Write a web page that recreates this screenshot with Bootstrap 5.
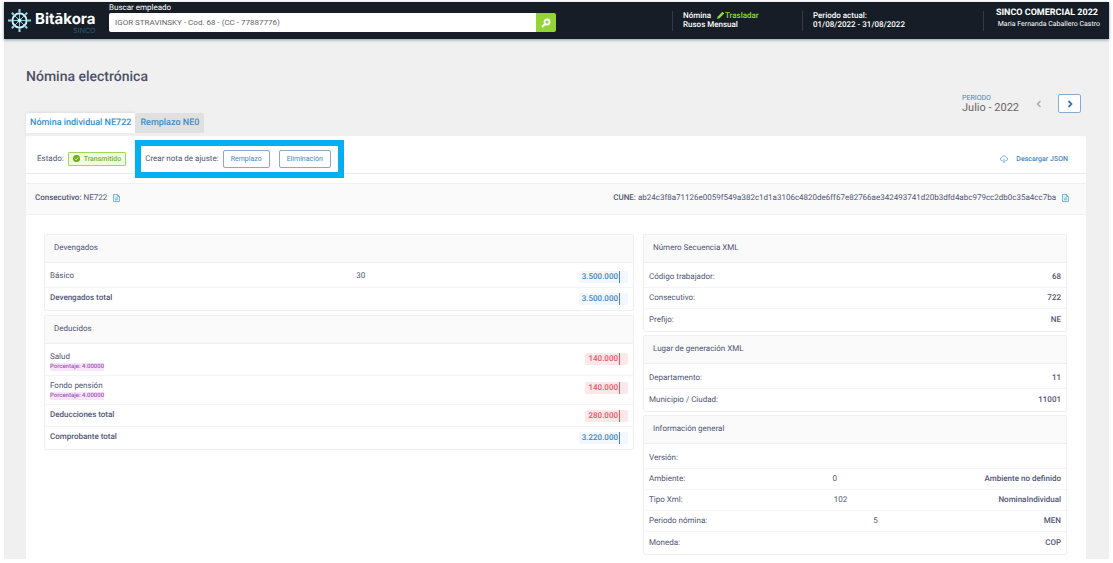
<!DOCTYPE html>
<html lang="es">
<head>
<meta charset="utf-8">
<meta name="viewport" content="width=device-width, initial-scale=1">
<title>Bitákora - Nómina electrónica</title>
<link href="https://cdn.jsdelivr.net/npm/bootstrap@5.3.0/dist/css/bootstrap.min.css" rel="stylesheet">
<style>
  body { font-family: Roboto, "Liberation Sans", sans-serif; font-size: 8px; line-height: 12px; color: #4f5673; background: #fff; padding: 2px 4px 4px; text-rendering: geometricPrecision; }
  a { text-decoration: none; color: #4a86b8; }
  .top-bar { background: #161d27; color: #fff; height: 37px; box-shadow: 0 1px 3px #8d9cb4; position: relative; line-height: 10px; }
  .brand { width: 105px; padding-left: 4px; color: #fff; }
  .brand-name { font: 700 15px/16px Inter, "DejaVu Sans", sans-serif; }
  .brand-sub { font: 400 7px/8px Inter, sans-serif; color: #2b5c72; }
  .search-zone { margin-right: 116px; padding-bottom: 6px; }
  .search-zone label { font-size: 8px; display: block; }
  .search-zone .form-control { height: 19px; min-height: 0; padding: 0 6px; font-size: 8px; color: #666; border: 0; border-radius: 2px 0 0 2px; }
  .search-zone .btn { width: 21px; height: 19px; padding: 0; background: #93d535; border: 0; border-radius: 0 2px 2px 0; }
  .info { border-left: 1px solid #333a44; height: 20px; padding-left: 10px; font-weight: 500; white-space: nowrap; line-height: 9px; }
  .info-payroll { width: 130px; }
  .info-period { width: 181px; }
  .info-user { width: 126px; padding: 0 9px 2px 0; }
  .company { font-size: 9px; line-height: 10px; margin-top: -3px; padding-right: 2px; font-weight: 700; }
  .user-name { font-size: 7px; font-weight: 400; }
  .green { color: #8fdc3c; }
  .page { background: #f0f0f0; padding: 28px 23px 0 22px; }
  h1 { font-size: 14px; line-height: 20px; font-weight: 500; color: #4d5069; margin: 0; }
  .period-label { font-size: 7px; line-height: 8px; color: #4a86b8; }
  .period-value { font-size: 11px; line-height: 12px; color: #666; }
  .period-bar { height: 26px; padding: 7px 5px 0 0; }
  .period-bar .btn { width: 23px; height: 19px; padding: 0; border-radius: 2px; display: flex; align-items: center; justify-content: center; }
  .btn-prev { background: #ededed; border: 0; opacity: 1; }
  .btn-next { background: #fff; border: 1px solid #86add0; }
  .nav-tabs { border: 0; padding-bottom: 3px; }
  .nav-tabs .nav-link { border: 0; padding: 1px 5px 0; line-height: 19px; font-size: 9px; font-weight: 500; color: #3c8dc5; background: #e0e0e0; border-radius: 2px 2px 0 0; margin: 0; }
  .nav-tabs .nav-link.active { background: #fff; color: #3c8dc5; box-shadow: 0 -1px 3px #ddd; padding: 1px 4px 0; }
  .sheet { background: #fff; border-radius: 2px 2px 0 0; }
  .tool-row { height: 38px; padding: 8px 18px 0 11px; border-bottom: 1px solid #e9ebf3; }
  .status { border: 1px solid #9bd85c; background: #f0fde0; color: #72b81e; height: 14px; padding: 0 4px; border-radius: 1px; font-size: 7px; font-weight: 500; }
  .download { font-size: 7px; font-weight: 500; }
  .adjust { margin-left: 19px; height: 18px; position: relative; }
  .adjust::after { content: ""; position: absolute; inset: -10px -13px -10px -10px; border: 6px solid #00b0f0; pointer-events: none; }
  .adjust .btn { height: 18px; padding: 0 7px; font-size: 7px; line-height: 16px; color: #4a86b8; border: 1px solid #86a9cc; border-radius: 2px; background: #fff; }
  .adjust .btn + .btn { margin-left: 9px; }
  .id-row { margin-top: 9px; height: 32px; padding: 0 17px 2px 9px; background: #fafafa; border: solid #f0f0f0; border-width: 1px 0; }
  .sheet-body { display: grid; grid-template-columns: 590fr 424fr; column-gap: 9px; padding: 19px 19px 4px 18px; align-items: start; }
  .stack { display: grid; row-gap: 4px; }
  .panel { border: 1px solid #efefef; border-radius: 2px; }
  .panel h2 { margin: 0; height: 28px; line-height: 25px; padding-left: 9px; font-size: 8px; font-weight: 400; background: #fafafa; border-bottom: 1px solid #efefef; }
  .panel ul { padding: 4px 0 0; margin: 0; list-style: none; }
  .panel li { display: flex; justify-content: space-between; align-items: center; height: 21px; padding: 0 5px; border-bottom: 1px solid #f4f4f4; }
  .panel li:last-child { border-bottom: 0; height: 22px; }
  .stack > .panel:not(.amounts):not(:last-child) { margin-bottom: -1px; }
  .amounts ul { padding-top: 3px; }
  .amounts li { height: 22px; padding-bottom: 2px; }
  .amounts li.tall { height: 29px; align-items: flex-start; padding-top: 4px; }
  .qty { flex: 0 0 47%; display: flex; justify-content: space-between; align-items: center; }
  b { font-weight: 500; }
  .amt { font-weight: 500; line-height: 12px; padding: 0 8px 0 3px; border-radius: 2px; color: #4a86b8; background: #f1f7fd; margin-top: 2px; }
  .amt.neg { color: #ee5568; background: #fde8e9; }
  .amt span { border-right: 1px solid; padding-right: 1px; display: block; }
  .pct { font-size: 6px; line-height: 8px; font-weight: 500; color: #a05bb0; background: #f8e4fb; display: table; }
</style>
</head>
<body>
<header class="top-bar d-flex align-items-center">
  <a href="#" class="brand d-flex align-items-center gap-1 flex-shrink-0">
    <svg width="23" height="23" viewBox="0 0 24 24" fill="none" stroke="#8ed2ea" stroke-width="1.4">
      <circle cx="12" cy="12" r="7.4" stroke="#d8f1f8" stroke-width="2"/>
      <path d="M12 5v14M5 12h14M7 7l10 10M17 7 7 17" stroke-width="1"/>
      <path d="M12 0v4M12 20v4M0 12h4M20 12h4M4 4l2 2M18 18l2 2M20 4l-2 2M6 18l-2 2" stroke-width="2.200"/>
      <circle cx="12" cy="12" r="2.200" fill="#d8f1f8" stroke="none"/>
    </svg>
    <span class="text-end pt-1"><span class="brand-name d-block">Bitākora</span><span class="brand-sub d-block">SINCO</span></span>
  </a>
  <form class="search-zone flex-grow-1">
    <label for="emp">Buscar empleado</label>
    <div class="d-flex">
      <input id="emp" class="form-control" type="text" value="IGOR STRAVINSKY - Cod. 68 - (CC - 77887776)">
      <button type="button" class="btn d-flex align-items-center justify-content-center" aria-label="Buscar">
        <svg width="10" height="10" viewBox="0 0 10 10" fill="none" stroke="#fff"><circle cx="6" cy="4" r="2.500" stroke-width="1.800"/><path d="M4 6 1 9" stroke-width="2.200"/></svg>
      </button>
    </div>
  </form>
  <div class="info info-payroll flex-shrink-0">
    <div>Nómina <a href="#" class="green ms-1"><svg width="8" height="8" viewBox="0 0 8 8" fill="#8fdc3c"><path d="M0 8 .8 5.500 5.500.8 7.200 2.500 2.500 7.200z"/></svg>Trasladar</a></div>
    <div>Rusos Mensual</div>
  </div>
  <div class="info info-period flex-shrink-0"><div>Periodo actual:</div><div>01/08/2022 - 31/08/2022</div></div>
  <div class="info info-user flex-shrink-0 text-end d-flex flex-column justify-content-between"><div class="company">SINCO COMERCIAL 2022</div><div class="user-name">Maria Fernanda Caballero Castro</div></div>
</header>
<main class="page">
  <h1>Nómina electrónica</h1>
  <div class="period-bar d-flex justify-content-end align-items-center">
    <div class="me-2"><div class="period-label">PERIODO</div><div class="period-value">Julio - 2022</div></div>
    <button class="btn btn-prev me-2" disabled aria-label="Anterior"><svg width="6" height="8" viewBox="0 0 6 8" fill="none" stroke="#888" stroke-width="1.500"><path d="M4.500 1 1.500 4l3 3"/></svg></button>
    <button class="btn btn-next" aria-label="Siguiente"><svg width="6" height="8" viewBox="0 0 6 8" fill="none" stroke="#3b78b5" stroke-width="1.800"><path d="m1.500 1 3 3-3 3"/></svg></button>
  </div>
  <nav class="nav nav-tabs">
    <a class="nav-link active" href="#">Nómina individual NE722</a>
    <a class="nav-link" href="#">Remplazo NE0</a>
  </nav>
  <section class="sheet">
    <div class="tool-row d-flex align-items-center">
      <span class="me-1">Estado:</span>
      <span class="status d-flex align-items-center gap-1"><svg width="7" height="7" viewBox="0 0 8 8"><circle cx="4" cy="4" r="4" fill="#6aaf16"/><path d="m2 4 1.500 1.500L6 2.800" fill="none" stroke="#f0fde0"/></svg>Transmitido</span>
      <div class="adjust d-flex align-items-center">
        <span class="me-1">Crear nota de ajuste:</span>
        <button class="btn">Remplazo</button>
        <button class="btn">Eliminación</button>
      </div>
      <a href="#" class="download ms-auto d-flex align-items-center gap-1"><svg class="me-1" width="8" height="8" viewBox="0 0 8 8" fill="none" stroke="#6aa0c8" stroke-width=".8"><path d="M2.500 5.500H2a1.500 1.500 0 0 1-.2-3A2.300 2.300 0 0 1 6.200 2.500a1.500 1.500 0 0 1-.2 3h-.5M4 3.500v4M2.800 6.300 4 7.500l1.200-1.200"/></svg>Descargar JSON</a>
    </div>
    <div class="id-row d-flex align-items-center justify-content-between">
      <div><b>Consecutivo:</b> NE722 <svg class="ms-1" width="7" height="8" viewBox="0 0 7 8" fill="#e3f3fb" stroke="#5fa9d0" stroke-width=".8"><path d="M.5.500h4l2 2v5h-6zM4.500.500v2h2M2 4h3M2 5.700h3"/></svg></div>
      <div><b>CUNE:</b> ab24c3f8a71126e0059f549a382c1d1a3106c4820de6ff67e82766ae342493741d20b3dfd4abc979cc2db0c35a4cc7ba <svg class="ms-1" width="7" height="8" viewBox="0 0 7 8" fill="#e3f3fb" stroke="#5fa9d0" stroke-width=".8"><path d="M.5.500h4l2 2v5h-6zM4.500.500v2h2M2 4h3M2 5.700h3"/></svg></div>
    </div>
    <div class="sheet-body">
      <div class="stack">
        <div class="panel amounts"><h2>Devengados</h2><ul>
          <li>Básico<span class="qty">30<span class="amt"><span>3.500.000</span></span></span></li>
          <li><b>Devengados total</b><span class="amt"><span>3.500.000</span></span></li>
        </ul></div>
        <div class="panel amounts"><h2>Deducidos</h2><ul>
          <li class="tall"><div>Salud<span class="pct">Porcentaje: 4.00000</span></div><span class="amt neg"><span>140.000</span></span></li>
          <li class="tall"><div>Fondo pensión<span class="pct">Porcentaje: 4.00000</span></div><span class="amt neg"><span>140.000</span></span></li>
          <li><b>Deducciones total</b><span class="amt neg"><span>280.000</span></span></li>
          <li><b>Comprobante total</b><span class="amt"><span>3.220.000</span></span></li>
        </ul></div>
      </div>
      <div class="stack">
        <div class="panel"><h2>Número Secuencia XML</h2><ul>
          <li>Código trabajador:<b>68</b></li><li>Consecutivo:<b>722</b></li><li>Prefijo:<b>NE</b></li>
        </ul></div>
        <div class="panel"><h2>Lugar de generación XML</h2><ul>
          <li>Departamento:<b>11</b></li><li>Municipio / Ciudad:<b>11001</b></li>
        </ul></div>
        <div class="panel"><h2>Información general</h2><ul>
          <li>Versión:</li>
          <li>Ambiente:<span>0</span><b>Ambiente no definido</b></li>
          <li>Tipo Xml:<span>102</span><b>NominaIndividual</b></li>
          <li>Periodo nómina:<span>5</span><b>MEN</b></li>
          <li>Moneda:<b>COP</b></li>
        </ul></div>
      </div>
    </div>
  </section>
</main>
<script src="https://cdn.jsdelivr.net/npm/bootstrap@5.3.0/dist/js/bootstrap.bundle.min.js"></script>
</body>
</html>
